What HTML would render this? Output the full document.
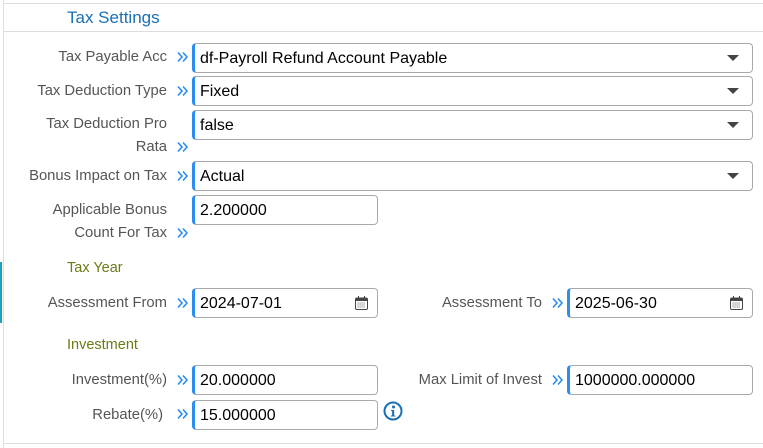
<!DOCTYPE html>
<html><head><style>
body{margin:0;width:763px;height:448px;background:#fff;position:relative;overflow:hidden;font-family:"Liberation Sans",sans-serif}
.a{position:absolute}
.lbl{position:absolute;font-size:14.8px;color:#555;text-align:right;line-height:22px;white-space:nowrap}
.in{position:absolute;box-sizing:border-box;border:1px solid #a9a9a9;border-left:3px solid #2d8cf0;border-radius:4px;font-size:16px;color:#000;padding-left:5px;line-height:30px;height:30px;background:#fff}
.dd::after{content:"";position:absolute;right:13px;top:11px;border-left:6px solid transparent;border-right:6px solid transparent;border-top:6px solid #444}
.ch{position:absolute;width:12px;height:12px}
.h{position:absolute;font-size:14.5px;color:#6f7a17}
.cal{position:absolute;right:9px;top:7px;width:13px;height:14px}
</style></head><body>
<div class="a" style="left:3px;top:0;width:1px;height:448px;background:#ddd"></div>
<div class="a" style="left:0;top:262px;width:2px;height:61px;background:#1fa0c0"></div>
<div class="a" style="left:3px;top:3px;width:760px;height:1px;background:#ddd"></div>
<div class="a" style="left:3px;top:31px;width:760px;height:1px;background:#ddd"></div>
<div class="a" style="left:3px;top:443px;width:760px;height:1px;background:#ddd"></div>
<div class="a" style="left:67px;top:8px;font-size:17px;color:#1a6fb5">Tax Settings</div>

<svg width="0" height="0" style="position:absolute"><defs><symbol id="c" viewBox="0 0 12 12"><path d="M1 1.5L5 6L1 10.5M6 1.5L10 6L6 10.5" fill="none" stroke="#2d8cf0" stroke-width="1.6"/></symbol></defs></svg>

<div class="lbl" style="right:596px;top:46px">Tax Payable Acc</div>
<svg class="ch" style="left:177px;top:51px"><use href="#c"/></svg>
<div class="in dd" style="left:192px;top:43px;width:561px">df-Payroll Refund Account Payable</div>

<div class="lbl" style="right:596px;top:80px">Tax Deduction Type</div>
<svg class="ch" style="left:177px;top:85px"><use href="#c"/></svg>
<div class="in dd" style="left:192px;top:76px;width:561px">Fixed</div>

<div class="lbl" style="right:596px;top:113px">Tax Deduction Pro</div>
<div class="lbl" style="right:596px;top:136px">Rata</div>
<svg class="ch" style="left:177px;top:141px"><use href="#c"/></svg>
<div class="in dd" style="left:192px;top:110px;width:561px">false</div>

<div class="lbl" style="right:596px;top:165px">Bonus Impact on Tax</div>
<svg class="ch" style="left:177px;top:170px"><use href="#c"/></svg>
<div class="in dd" style="left:192px;top:161px;width:561px">Actual</div>

<div class="lbl" style="right:596px;top:199px">Applicable Bonus</div>
<div class="lbl" style="right:596px;top:222px">Count For Tax</div>
<svg class="ch" style="left:177px;top:227px"><use href="#c"/></svg>
<div class="in" style="left:192px;top:195px;width:186px">2.200000</div>

<div class="h" style="left:67px;top:260px">Tax Year</div>

<div class="lbl" style="right:596px;top:292px">Assessment From</div>
<svg class="ch" style="left:177px;top:297px"><use href="#c"/></svg>
<div class="in" style="left:192px;top:288px;width:186px">2024-07-01<svg class="cal" viewBox="0 0 13 14"><rect x="0.5" y="2" width="12" height="11.5" rx="1.5" fill="none" stroke="#444"/><rect x="0.5" y="2" width="12" height="3" fill="#444"/><path d="M3.5 0v3M9.5 0v3" stroke="#444"/><path d="M2.5 7h8M2.5 9h8M2.5 11h8" stroke="#777" stroke-dasharray="1.2 .8"/></svg></div>

<div class="lbl" style="right:221px;top:292px">Assessment To</div>
<svg class="ch" style="left:552px;top:297px"><use href="#c"/></svg>
<div class="in" style="left:567px;top:288px;width:186px">2025-06-30<svg class="cal" viewBox="0 0 13 14"><rect x="0.5" y="2" width="12" height="11.5" rx="1.5" fill="none" stroke="#444"/><rect x="0.5" y="2" width="12" height="3" fill="#444"/><path d="M3.5 0v3M9.5 0v3" stroke="#444"/><path d="M2.5 7h8M2.5 9h8M2.5 11h8" stroke="#777" stroke-dasharray="1.2 .8"/></svg></div>

<div class="h" style="left:67px;top:337px">Investment</div>

<div class="lbl" style="right:596px;top:369px">Investment(%)</div>
<svg class="ch" style="left:177px;top:374px"><use href="#c"/></svg>
<div class="in" style="left:192px;top:365px;width:186px">20.000000</div>

<div class="lbl" style="right:221px;top:369px">Max Limit of Invest</div>
<svg class="ch" style="left:552px;top:374px"><use href="#c"/></svg>
<div class="in" style="left:567px;top:365px;width:186px">1000000.000000</div>

<div class="lbl" style="right:600px;top:404px">Rebate(%)</div>
<svg class="ch" style="left:177px;top:408px"><use href="#c"/></svg>
<div class="in" style="left:192px;top:400px;width:186px">15.000000</div>
<svg class="a" style="left:383px;top:401px" width="20" height="20" viewBox="0 0 20 20"><circle cx="10" cy="10" r="8.5" fill="#fff" stroke="#1a6fb5" stroke-width="2"/><circle cx="10.5" cy="6" r="1.5" fill="#1a6fb5"/><path d="M8 9h3.2v5.5h1.3v1H7.8v-1h1.3V10H8z" fill="#1a6fb5"/></svg>
</body></html>
